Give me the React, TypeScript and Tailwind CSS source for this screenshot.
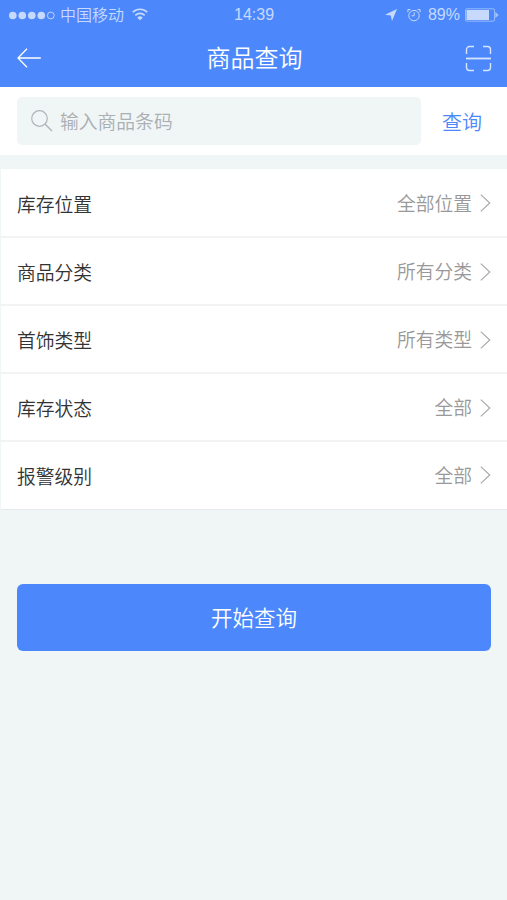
import React, { useState } from 'react';

interface Filter {
  id: string;
  label: string;
  value: string;
}

const filters: Filter[] = [
  { id: 'location', label: '库存位置', value: '全部位置' },
  { id: 'category', label: '商品分类', value: '所有分类' },
  { id: 'jewelry', label: '首饰类型', value: '所有类型' },
  { id: 'status', label: '库存状态', value: '全部' },
  { id: 'alarm', label: '报警级别', value: '全部' }
];

function StatusBar() {
  return (
    <div className="relative flex h-[30px] items-center justify-between pl-[9px] pr-[8px] text-[#c7dafe]">
      <div className="flex items-center">
        <svg width="46" height="9" viewBox="0 0 46 9" fill="currentColor">
          <circle cx="3.8" cy="4.5" r="3.8" />
          <circle cx="13.3" cy="4.5" r="3.8" />
          <circle cx="22.8" cy="4.5" r="3.8" />
          <circle cx="32.3" cy="4.5" r="3.8" />
          <circle cx="41.8" cy="4.5" r="3.4" fill="none" stroke="currentColor" strokeWidth="0.9" />
        </svg>
        <span className="-mt-[2px] ml-[5px] text-[16px] leading-[28px]">中国移动</span>
        <svg className="-mt-px ml-[8px]" width="16" height="13" viewBox="0 0 16 13" fill="none" stroke="currentColor" strokeWidth="1.6">
          <path d="M.8 4.2a10.4 10.4 0 0 1 14.4 0" />
          <path d="M3.3 7.3a6.8 6.8 0 0 1 9.4 0" />
          <path d="M8 12.3 5.2 9.7a4 4 0 0 1 5.6 0z" fill="currentColor" stroke="none" />
        </svg>
      </div>

      <span className="absolute left-[234px] font-['Liberation_Sans'] text-[16px] leading-[30px]">14:39</span>

      <div className="flex items-center">
        <svg width="12" height="12" viewBox="0 0 12 12" fill="currentColor">
          <path d="M12 0 7 12 5.8 6.4 0 5.8z" />
        </svg>
        <svg className="ml-[10px]" width="14" height="14" viewBox="0 0 14 14" fill="none" stroke="currentColor" strokeWidth="1">
          <circle cx="7" cy="7.6" r="5.2" />
          <path d="M7.2 4.4v3.4H4.6M.9 4.2V1.6h2.6M13.1 4.2V1.6h-2.6" />
        </svg>
        <span className="ml-[7px] font-['Liberation_Sans'] text-[16px] leading-[30px]">89%</span>
        <svg className="ml-[5px]" width="34" height="14" viewBox="0 0 34 14">
          <rect x="0.5" y="0.8" width="29" height="12.4" rx="1.2" fill="none" stroke="currentColor" strokeOpacity="0.6" />
          <rect x="1.5" y="2" width="22.5" height="10" fill="currentColor" />
          <path d="M30.3 3.8 33.6 7l-3.3 3.2z" fill="currentColor" fillOpacity="0.7" />
        </svg>
      </div>
    </div>
  );
}

function App() {
  const [keyword, setKeyword] = useState('');

  return (
    <div className="min-h-screen bg-[#f0f5f6] font-['Noto_Sans_CJK_SC',sans-serif] font-[350]">
      {/* Header */}
      <header className="h-[87px] bg-[#4c88fb] text-white">
        <StatusBar />
        <div className="flex h-[56px] items-center justify-between pl-[17px] pr-[15px]">
          <button className="w-[27px]">
            <svg width="24" height="20" viewBox="0 0 24 20" fill="none" stroke="currentColor" strokeWidth="1.3">
              <path d="M10 .8 1 10l9 9.2M1 10h22.8" />
            </svg>
          </button>
          <h1 className="-mt-[2px] text-[24px] leading-[54px]">商品查询</h1>
          <button>
            <svg width="27" height="27" viewBox="0 0 27 27" fill="none" stroke="#d6e4fe" strokeWidth="1.4">
              <path d="M1.5 9V4.5a3 3 0 0 1 3-3H9M18 1.5h4.5a3 3 0 0 1 3 3V9M25.5 18v4.5a3 3 0 0 1-3 3H18M9 25.5H4.5a3 3 0 0 1-3-3V18" />
              <path d="M1 13.5h25" strokeWidth="1.8" />
            </svg>
          </button>
        </div>
      </header>

      {/* Search */}
      <div className="flex h-[68px] items-center bg-white pl-[17px]">
        <label className="flex h-[48px] w-[404px] items-center rounded-[5px] bg-[#f0f5f6] pl-[14px]">
          <svg width="22" height="22" viewBox="0 0 22 22" fill="none" stroke="#b0b5b9" strokeWidth="1.2">
            <circle cx="8.5" cy="8.5" r="7.8" />
            <path d="m14.2 14.2 6.8 6.8" strokeWidth="1.5" />
          </svg>
          <input
            value={keyword}
            onChange={(e) => setKeyword(e.target.value)}
            placeholder="输入商品条码"
            className="ml-[7px] w-[320px] bg-transparent text-[18.8px] text-gray-700 outline-none placeholder:text-[#aaafb3]"
          />
        </label>
        <button className="ml-[21px] mt-px text-[20px] text-[#4c88fb]">查询</button>
      </div>

      {/* Filters */}
      <ul className="ml-px mt-[14px] border-b border-[#e6eaea] bg-white">
        {filters.map((filter) => (
          <li
            key={filter.id}
            className="flex h-[68px] items-center justify-between border-b-2 border-[#f2f3f4] px-[16px] first:h-[69px] last:h-[67px] last:border-white"
          >
            <span className="mt-[3px] text-[18.8px] text-[#333333]">{filter.label}</span>
            <span className="mt-px flex items-center text-[18.8px] text-[#999999]">
              {filter.value}
              <svg className="ml-[8px]" width="11" height="18" viewBox="0 0 11 18" fill="none" stroke="#a6a6a6" strokeWidth="1.1">
                <path d="m.8.6 9 8.4-9 8.4" />
              </svg>
            </span>
          </li>
        ))}
      </ul>

      {/* Submit */}
      <div className="pl-[17px] pr-[16px] pt-[74px]">
        <button className="h-[67px] w-full rounded-[6px] bg-[#4c88fb] text-[21.5px] text-white">开始查询</button>
      </div>
    </div>
  );
}

export default App;
